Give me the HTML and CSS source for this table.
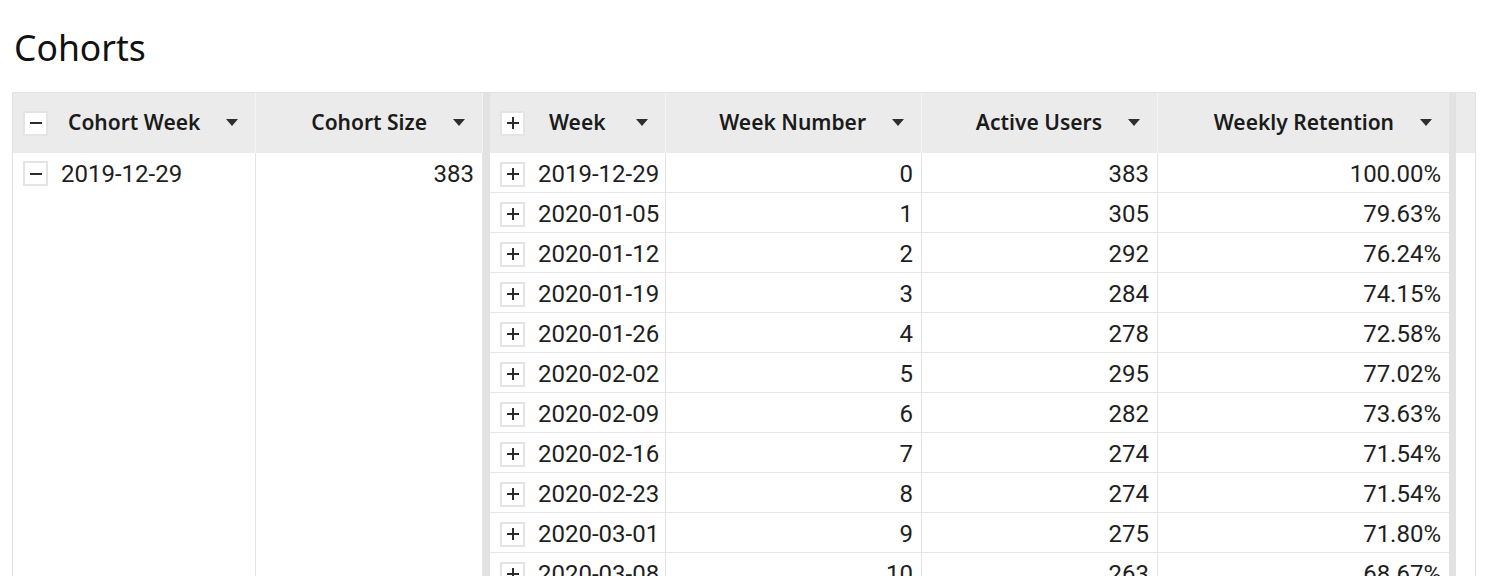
FILE: index.html
```html
<!DOCTYPE html>
<html>
<head>
<meta charset="utf-8">
<link rel="stylesheet" href="styles.css">
</head>
<body>
<h1 class="title">Cohorts</h1>
<div class="grid">
  <div class="group left">
    <div class="head">
      <div class="hcell c-week">
        <span class="box"><svg width="12" height="12" viewBox="0 0 12 12"><path d="M0 6h12" stroke="#2b2b2b" stroke-width="2"/></svg></span>
        <span class="htext first">Cohort Week</span>
        <span class="spacer"></span>
        <span class="caret"></span>
      </div>
      <div class="hcell c-size">
        <span class="spacer"></span>
        <span class="htext">Cohort Size</span>
        <span class="caret gap"></span>
      </div>
    </div>
    <div class="lbody">
      <div class="bcell c-week">
        <div class="line">
          <span class="box"><svg width="12" height="12" viewBox="0 0 12 12"><path d="M0 6h12" stroke="#2b2b2b" stroke-width="2"/></svg></span>
          <span class="btext">2019-12-29</span>
        </div>
      </div>
      <div class="bcell c-size">
        <div class="line num">383</div>
      </div>
    </div>
  </div>
  <div class="splitter"></div>
  <div class="group right">
    <div class="head rgrid">
      <div class="hcell">
        <span class="box"><svg width="12" height="12" viewBox="0 0 12 12"><path d="M0 6h12M6 0v12" stroke="#2b2b2b" stroke-width="2"/></svg></span>
        <span class="htext second">Week</span>
        <span class="spacer"></span>
        <span class="caret"></span>
      </div>
      <div class="hcell">
        <span class="spacer"></span>
        <span class="htext">Week Number</span>
        <span class="caret gap"></span>
      </div>
      <div class="hcell">
        <span class="spacer"></span>
        <span class="htext">Active Users</span>
        <span class="caret gap"></span>
      </div>
      <div class="hcell last">
        <span class="spacer"></span>
        <span class="htext">Weekly Retention</span>
        <span class="caret gap"></span>
      </div>
    </div>
    <div class="rows" id="rows"></div>
  </div>
  <div class="gutter"></div>
  <div class="tail"><div class="tail-head"></div></div>
</div>
<script>
var data = [
  ["2019-12-29","0","383","100.00%"],
  ["2020-01-05","1","305","79.63%"],
  ["2020-01-12","2","292","76.24%"],
  ["2020-01-19","3","284","74.15%"],
  ["2020-01-26","4","278","72.58%"],
  ["2020-02-02","5","295","77.02%"],
  ["2020-02-09","6","282","73.63%"],
  ["2020-02-16","7","274","71.54%"],
  ["2020-02-23","8","274","71.54%"],
  ["2020-03-01","9","275","71.80%"],
  ["2020-03-08","10","263","68.67%"]
];
var plus = '<span class="box"><svg width="12" height="12" viewBox="0 0 12 12"><path d="M0 6h12M6 0v12" stroke="#2b2b2b" stroke-width="2"/></svg></span>';
var html = "";
data.forEach(function (r) {
  html += '<div class="row rgrid">' +
    '<div class="rcell">' + plus + '<span class="btext">' + r[0] + '</span></div>' +
    '<div class="rcell num">' + r[1] + '</div>' +
    '<div class="rcell num">' + r[2] + '</div>' +
    '<div class="rcell num last">' + r[3] + '</div>' +
    '</div>';
});
document.getElementById("rows").innerHTML = html;
</script>
</body>
</html>
```
FILE: styles.css
```css
* { box-sizing: border-box; }
html, body { margin: 0; padding: 0; background: #fff; overflow: hidden; }
body { font-family: Roboto, "Liberation Sans", sans-serif; color: #222; }

.title {
  margin: 0;
  height: 92px;
  padding-left: 14px;
  line-height: 94px;
  font-family: "Noto Sans", "Open Sans", sans-serif;
  font-weight: 400;
  font-size: 35.5px;
  color: #111;
}

.grid {
  margin-left: 12px;
  width: 1464px;
  height: 484px;
  border: 1px solid #e2e2e2;
  border-bottom: none;
  display: flex;
  overflow: hidden;
}

.group { display: flex; flex-direction: column; }
.left { width: 470px; }
.right { width: 959px; }

.head {
  height: 60px;
  background: #ebebeb;
  display: flex;
}
.left .head .c-week { width: 243px; }
.left .head .c-size { width: 227px; }

.hcell {
  display: flex;
  align-items: center;
  height: 60px;
  padding: 0 17px 0 10px;
  border-right: 1px solid #f4f4f4;
  font-family: "Noto Sans", "Open Sans", sans-serif;
  font-weight: 600;
  font-size: 21px;
  color: #1b1b1b;
  white-space: nowrap;
}
.hcell.last { border-right: none; }
.spacer { flex: 1; }
.htext { margin-top: -2px; }
.htext.first { margin-left: 20px; }
.htext.second { margin-left: 24px; }

.caret {
  width: 0;
  height: 0;
  border-left: 6.5px solid transparent;
  border-right: 6.5px solid transparent;
  border-top: 7px solid #2e2e2e;
  margin-top: -1px;
}
.caret.gap { margin-left: 26px; }

.box {
  width: 25px;
  height: 25px;
  border: 2px solid #e4e4e4;
  background: #fff;
  display: inline-flex;
  align-items: center;
  justify-content: center;
  flex: none;
}
.box svg { display: block; }

.lbody { flex: 1; display: flex; }
.bcell {
  height: 100%;
  border-right: 1px solid #e4e4e4;
}
.bcell.c-week { width: 243px; }
.bcell.c-size { width: 227px; }
.line {
  height: 40px;
  display: flex;
  align-items: center;
  padding: 1px 8px 0 10px;
}
.btext { margin-left: 13px; font-size: 24px; color: #1e1e1e; white-space: nowrap; }
.num { justify-content: flex-end; font-size: 24px; color: #1e1e1e; white-space: nowrap; }

.splitter { width: 7px; background: #e2e2e2; flex: none; }
.gutter { width: 7px; background: #e2e2e2; flex: none; }
.tail { width: 19px; flex: none; }
.tail-head { height: 60px; background: #ebebeb; }

.rgrid {
  display: grid;
  grid-template-columns: 176px 256px 236px 291px;
}
.rows { flex: 1; }
.row { height: 40px; border-bottom: 1px solid #e6e6e6; }
.rcell {
  display: flex;
  align-items: center;
  height: 39px;
  padding: 3px 8px 0 10px;
  border-right: 1px solid #e4e4e4;
  font-size: 24px;
  color: #1e1e1e;
  overflow: hidden;
}
.rcell.last { border-right: none; }
```
